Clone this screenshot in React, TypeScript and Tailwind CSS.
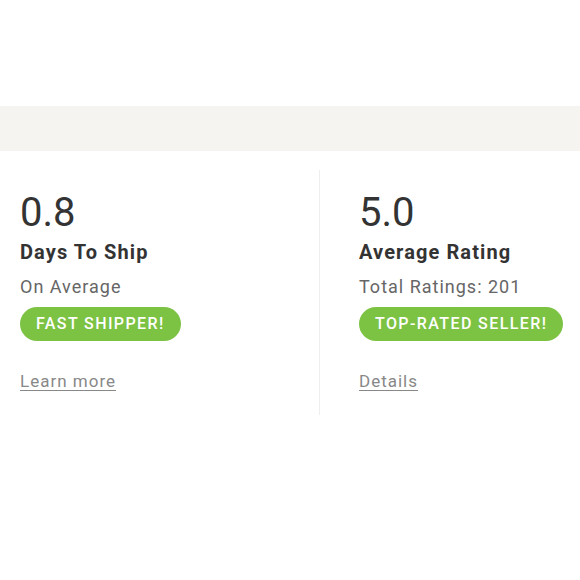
export default function App() {
  return (
    <div className="w-[580px] h-[580px] bg-white overflow-hidden" style={{ fontFamily: "Roboto, 'Liberation Sans', sans-serif" }}>
      <div className="h-[106px]" />
      <div className="h-[45px] bg-[#f5f4f1]" />
      <div className="flex pt-[19px]">
        <div className="w-[320px] pl-5 border-r border-[#eeeeee] h-[245px]">
          <Stat value="0.8" title="Days To Ship" sub="On Average" badge="FAST SHIPPER!" link="Learn more" />
        </div>
        <div className="pl-[39px] flex-1">
          <Stat value="5.0" title="Average Rating" sub="Total Ratings: 201" badge="TOP-RATED SELLER!" link="Details" />
        </div>
      </div>
    </div>
  );
}

function Stat({ value, title, sub, badge, link }: { value: string; title: string; sub: string; badge: string; link: string }) {
  return (
    <div className="flex flex-col items-start">
      <div className="text-[40px] leading-[40px] text-[#333] mt-[23px]">{value}</div>
      <div className="text-[20px] leading-[24px] font-bold tracking-[1.1px] text-[#333] mt-[7px]">{title}</div>
      <div className="text-[18px] leading-[22px] tracking-[1px] text-[#666] mt-[12px]">{sub}</div>
      <div className="mt-[9px] h-[34px] px-[16px] rounded-full bg-[#7cc243] text-white text-[16px] font-medium tracking-[1.4px] flex items-center">{badge}</div>
      <a className="mt-[30px] text-[17px] leading-[20px] tracking-[1px] text-[#888] underline underline-offset-[3px]">{link}</a>
    </div>
  );
}
